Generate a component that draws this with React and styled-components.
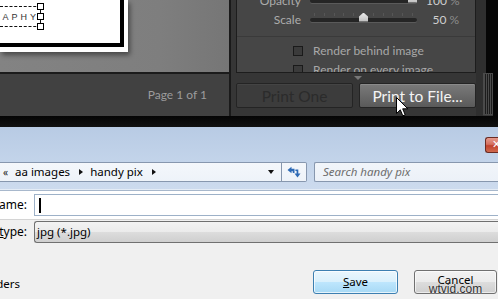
import React from 'react';
import styled, { createGlobalStyle, css } from 'styled-components';

const LR = `Lato, "Liberation Sans", sans-serif`;
const WIN = `"Noto Sans", "Liberation Sans", sans-serif`;

const Global = createGlobalStyle`
  html, body { margin: 0; padding: 0; background: #f0f0f0; }
  body { width: 498px; height: 299px; overflow: hidden; }
  * { box-sizing: border-box; }
`;

const Screen = styled.div`
  position: relative;
  width: 498px;
  height: 299px;
  overflow: hidden;
  display: flex;
  flex-direction: column;
`;

/* ---------- Lightroom part ---------- */
const LrTop = styled.div`
  height: 116px;
  display: flex;
  background: #383838;
  font-family: ${LR};
`;
const LeftCol = styled.div`
  width: 229px;
  display: flex;
  flex-direction: column;
`;
const Canvas = styled.div`
  height: 72px;
  background: linear-gradient(90deg, #838383 0%, #7e7e7e 70%, #767676 100%);
  overflow: hidden;
`;
const Paper = styled.div`
  width: 128px;
  height: 52px;
  background: #fff;
  padding: 0 4px 5px 0;
  box-shadow: 2px 3px 5px rgba(0, 0, 0, 0.45);
  display: flex;
`;
const Frame = styled.div`
  flex: 1;
  border-right: 4px solid #000;
  border-bottom: 4px solid #000;
  padding-top: 6px;
`;
const TextBox = styled.div`
  position: relative;
  width: 41px;
  height: 21px;
  border-top: 1px dashed #111;
  border-bottom: 1px dashed #111;
  border-right: 1px solid #111;
  display: flex;
  padding-right: 1px;
`;
const TextClip = styled.div`
  flex: 1;
  overflow: hidden;
  display: flex;
  justify-content: flex-end;
  align-items: center;
`;
const BoxText = styled.span`
  flex-shrink: 0;
  white-space: nowrap;
  font-family: "Liberation Sans", sans-serif;
  font-size: 9px;
  letter-spacing: 3px;
  color: #333;
  line-height: 10px;
`;
const Handle = styled.span`
  position: absolute;
  right: -4px;
  width: 7px;
  height: 7px;
  background: #fff;
  border: 1px solid #000;
  ${p => p.$pos === 'top' && css`top: -4px;`}
  ${p => p.$pos === 'mid' && css`top: 6px;`}
  ${p => p.$pos === 'bot' && css`bottom: -4px;`}
`;
const Toolbar = styled.div`
  flex: 1;
  border-top: 2px solid #1b1b1b;
  background: #414141;
  display: flex;
  align-items: center;
  justify-content: flex-end;
  padding-right: 22px;
`;
const PageLabel = styled.span`
  font-size: 12px;
  color: #9c9c9c;
  line-height: 14px;
`;
const VSep = styled.div`
  width: 2px;
  background: #1a1a1a;
`;
const PanelCol = styled.div`
  width: 245px;
  padding-left: 5px;
  display: flex;
  flex-direction: column;
  background: #363636;
`;
const PanelBox = styled.div`
  height: 73px;
  border: 1px solid #1d1d1d;
  border-top: none;
  background: #464646;
  overflow: hidden;
`;
const SliderRow = styled.div`
  display: grid;
  grid-template-columns: 64px 107px 1fr;
  column-gap: 9px;
  align-items: center;
  height: 19px;
  padding-right: 16px;
  ${p => p.$first && css`margin-top: -9px;`}
`;
const RowLabel = styled.span`
  text-align: right;
  font-size: 12px;
  color: #acacac;
  line-height: 14px;
`;
const Track = styled.div`
  position: relative;
  height: 4px;
  border-radius: 2px;
  background: #252525;
  box-shadow: 0 1px 0 #5a5a5a;
`;
const Ticks = styled.div`
  position: absolute;
  left: 4px;
  right: 4px;
  top: -5px;
  height: 3px;
  background: repeating-linear-gradient(90deg, #565656 0 1px, transparent 1px 9.8px);
`;
const Thumb = styled.div`
  position: absolute;
  top: -5px;
  width: 9px;
  height: 9px;
  background: linear-gradient(#eaeaea, #bdbdbd);
  clip-path: polygon(50% 0, 100% 45%, 100% 100%, 0 100%, 0 45%);
`;
const Value = styled.span`
  text-align: right;
  font-size: 12px;
  line-height: 14px;
  color: #cfcfcf;
  white-space: nowrap;
`;
const Pct = styled.span`
  color: #8c8c8c;
  margin-left: 3px;
`;
const Divider = styled.div`
  height: 1px;
  background: #3a3a3a;
  margin: 7px 0 4px;
`;
const CheckRow = styled.div`
  display: flex;
  align-items: center;
  height: 19px;
  padding-left: 56px;
  gap: 10px;
`;
const Check = styled.span`
  width: 10px;
  height: 10px;
  border: 1px solid #1a1a1a;
  background: #3b3b3b;
`;
const CheckLabel = styled.span`
  font-size: 12px;
  color: #a8a8a8;
  line-height: 14px;
  white-space: nowrap;
`;
const BottomArea = styled.div`
  flex: 1;
  display: flex;
  flex-direction: column;
`;
const TriRow = styled.div`
  height: 10px;
  display: flex;
  justify-content: center;
  align-items: center;
  padding-left: 4px;
`;
const Tri = styled.span`
  width: 0;
  height: 0;
  border-left: 4px solid transparent;
  border-right: 4px solid transparent;
  border-top: 4px solid #777;
`;
const ButtonRow = styled.div`
  display: flex;
  gap: 6px;
`;
const LrButton = styled.div`
  width: 117px;
  height: 25px;
  border: 1px solid #242424;
  border-radius: 2px;
  display: flex;
  align-items: center;
  justify-content: center;
  font-size: 15.5px;
  line-height: 18px;
  ${p => p.$disabled ? css`
    background: #3c3c3c;
    color: #2b2b2b;
    box-shadow: inset 0 1px 0 #444;
  ` : css`
    background: linear-gradient(#7a7a7a, #5a5a5a);
    color: #f4f4f4;
    box-shadow: inset 0 1px 0 #8a8a8a;
  `}
`;
const Strip = styled.div`
  width: 7px;
  background: #2f2f2f;
`;
const GripCol = styled.div`
  width: 10px;
  display: flex;
  flex-direction: column;
`;
const GripTop = styled.div`
  height: 73px;
  background: linear-gradient(90deg, #2f2f2f 3px, #060606 3px);
`;
const Grip = styled.div`
  height: 42px;
  border: 1px solid #4a4a4a;
  background: repeating-linear-gradient(90deg, #4b4b4b 0 1px, #1c1c1c 1px 2px);
`;
const Edge = styled.div`
  flex: 1;
  background: #060606;
`;
const Band = styled.div`
  height: 11px;
  background: linear-gradient(#050505, #111);
`;

/* ---------- Windows dialog part ---------- */
const Dialog = styled.div`
  flex: 1;
  display: flex;
  flex-direction: column;
  font-family: ${WIN};
  font-size: 11.5px;
  color: #000;
`;
const TitleBar = styled.div`
  height: 35px;
  background: linear-gradient(#b8cbe4, #c3d4ea);
  display: flex;
  justify-content: flex-end;
  align-items: flex-start;
  padding-top: 10px;
`;
const CloseBtn = styled.div`
  width: 13px;
  height: 16px;
  border: 1px solid #6b2b22;
  border-right: none;
  border-radius: 3px 0 0 3px;
  background: linear-gradient(#e59a8d 0%, #d4705f 45%, #c2412c 55%, #cf6a4f 100%);
  color: #fff;
  font-family: "DejaVu Sans", sans-serif;
  font-size: 11px;
  font-weight: bold;
  line-height: 14px;
  padding-left: 6px;
  overflow: hidden;
  white-space: nowrap;
`;
const NavBand = styled.div`
  height: 29px;
  background: linear-gradient(#c3d4ea, #cddbee);
  border-bottom: 1px solid #a8b8cc;
  box-shadow: inset 0 -1px 0 #e4ecf6;
`;
const AddressRow = styled.div`
  height: 20px;
  display: flex;
  gap: 7px;
`;
const AddrBox = styled.div`
  width: 307px;
  display: flex;
  border: 1px solid #8797ae;
  border-left: none;
  background: linear-gradient(#f4f7fb, #eef3f9);
  border-radius: 0 2px 2px 0;
`;
const Crumbs = styled.div`
  flex: 1;
  display: flex;
  align-items: center;
  padding-left: 3px;
  line-height: 14px;
  white-space: nowrap;
`;
const Chev = styled.span`
  font-size: 10px;
  width: 12px;
  color: #222;
`;
const CrumbArrow = styled.span`
  width: 0;
  height: 0;
  border-top: 3.5px solid transparent;
  border-bottom: 3.5px solid transparent;
  border-left: 4px solid #111;
  margin: 0 ${p => p.$right}px 0 ${p => p.$left}px;
`;
const DropArrow = styled.span`
  width: 0;
  height: 0;
  border-left: 3.5px solid transparent;
  border-right: 3.5px solid transparent;
  border-top: 4px solid #111;
  margin: 0 7px 0 auto;
`;
const RefreshBox = styled.div`
  width: 25px;
  border-left: 1px solid #8797ae;
  display: flex;
  align-items: center;
  justify-content: center;
`;
const SearchBox = styled.div`
  flex: 1;
  border: 1px solid #8797ae;
  border-right: none;
  border-radius: 2px 0 0 2px;
  background: linear-gradient(#f1f5fa, #ecf1f8);
  display: flex;
  align-items: center;
  padding-left: 8px;
  font-style: italic;
  color: #6d6d6d;
  line-height: 14px;
  white-space: nowrap;
`;
const WhiteArea = styled.div`
  height: 29px;
  background: #fff;
  border-bottom: 1px solid #d4d4d4;
  padding-top: 3px;
`;
const FieldRow = styled.div`
  display: flex;
  gap: 7px;
  height: 22px;
`;
const FieldLabel = styled.div`
  width: 27px;
  display: flex;
  justify-content: flex-end;
  align-items: center;
  overflow: hidden;
  white-space: nowrap;
  line-height: 14px;
  font-size: 12px;
`;
const LabelText = styled.span`
  flex-shrink: 0;
`;
const U = styled.span`
  text-decoration: underline;
`;
const Input = styled.div`
  flex: 1;
  border: 1px solid #9db1c8;
  border-right: none;
  background: #fff;
  display: flex;
  align-items: center;
  padding-left: 4px;
`;
const Caret = styled.span`
  width: 2px;
  height: 15px;
  background: #000;
`;
const GrayArea = styled.div`
  flex: 1;
  background: #f0f0f0;
  padding-top: 1px;
  display: flex;
  flex-direction: column;
`;
const Combo = styled.div`
  flex: 1;
  border: 1px solid #707070;
  border-right: none;
  border-radius: 3px 0 0 3px;
  background: linear-gradient(#f3f3f3 0%, #ebebeb 50%, #dddddd 50%, #cfcfcf 100%);
  display: flex;
  align-items: center;
  padding-left: 2px;
  line-height: 14px;
`;
const ActionRow = styled.div`
  margin-top: 27px;
  height: 24px;
  display: flex;
  align-items: center;
  padding-right: 1px;
`;
const HideLabel = styled.div`
  width: 20px;
  display: flex;
  justify-content: flex-end;
  overflow: hidden;
  white-space: nowrap;
  line-height: 14px;
  font-size: 11.5px;
  margin-top: 4px;
  margin-right: auto;
`;
const WinButton = styled.div`
  position: relative;
  width: ${p => p.$w}px;
  height: 24px;
  border-radius: 3px;
  display: flex;
  align-items: center;
  justify-content: center;
  line-height: 14px;
  ${p => p.$default ? css`
    border: 1px solid #3c7fb1;
    background: linear-gradient(#eaf6fd 0%, #d9f0fc 50%, #bee6fd 50%, #a7d9f5 100%);
    box-shadow: inset 0 0 0 1px rgba(255,255,255,0.7);
  ` : css`
    border: 1px solid #707070;
    background: linear-gradient(#f2f2f2 0%, #ebebeb 50%, #dddddd 50%, #cfcfcf 100%);
    box-shadow: inset 0 0 0 1px rgba(255,255,255,0.6);
  `}
`;
const ButtonText = styled.span`
  ${p => p.$raised && css`margin-top: -4px;`}
`;
const Watermark = styled.span`
  position: absolute;
  left: 0;
  right: 0;
  top: 12px;
  text-align: center;
  font-family: "Liberation Sans", sans-serif;
  font-size: 12px;
  line-height: 12px;
  color: #2e2e2e;
  text-shadow: 0 0 1px #fff;
`;
const Cursor = styled.svg`
  position: absolute;
  left: 396px;
  top: 97px;
`;

function Slider({ value, ticks }) {
  return (
    <Track>
      {ticks && <Ticks />}
      <Thumb style={{ left: `${(value / 100) * 98}px` }} />
    </Track>
  );
}

export default function App() {
  return (
    <>
      <Global />
      <Screen>
        <LrTop>
          <LeftCol>
            <Canvas>
              <Paper>
                <Frame>
                  <TextBox>
                    <TextClip>
                      <BoxText>PHOTOGRAPHY</BoxText>
                    </TextClip>
                    <Handle $pos="top" />
                    <Handle $pos="mid" />
                    <Handle $pos="bot" />
                  </TextBox>
                </Frame>
              </Paper>
            </Canvas>
            <Toolbar>
              <PageLabel>Page 1 of 1</PageLabel>
            </Toolbar>
          </LeftCol>
          <VSep />
          <PanelCol>
            <PanelBox>
              <SliderRow $first>
                <RowLabel>Opacity</RowLabel>
                <Slider value={100} />
                <Value>100<Pct>%</Pct></Value>
              </SliderRow>
              <SliderRow>
                <RowLabel>Scale</RowLabel>
                <Slider value={50} ticks />
                <Value>50<Pct>%</Pct></Value>
              </SliderRow>
              <Divider />
              <CheckRow>
                <Check />
                <CheckLabel>Render behind image</CheckLabel>
              </CheckRow>
              <CheckRow>
                <Check />
                <CheckLabel>Render on every image</CheckLabel>
              </CheckRow>
            </PanelBox>
            <BottomArea>
              <TriRow><Tri /></TriRow>
              <ButtonRow>
                <LrButton $disabled>Print One</LrButton>
                <LrButton>Print to File...</LrButton>
              </ButtonRow>
            </BottomArea>
          </PanelCol>
          <Strip />
          <GripCol>
            <GripTop />
            <Grip />
          </GripCol>
          <Edge />
        </LrTop>
        <Band />
        <Dialog>
          <TitleBar>
            <CloseBtn>✕</CloseBtn>
          </TitleBar>
          <NavBand>
            <AddressRow>
              <AddrBox>
                <Crumbs>
                  <Chev>«</Chev>
                  <span>aa images</span>
                  <CrumbArrow $left={9} $right={7} />
                  <span>handy pix</span>
                  <CrumbArrow $left={9} $right={0} />
                  <DropArrow />
                </Crumbs>
                <RefreshBox>
                  <svg width="14" height="12" viewBox="0 0 14 12">
                    <path d="M0.5 4 L4.5 0.8 L4.5 2.8 L7.5 2.8 L7.5 7 L5.8 7 L5.8 5.2 L4.5 5.2 L4.5 7.2 Z" fill="#2e6ab5" />
                    <path d="M13.5 7.5 L10.5 11.5 L7.5 7.5 L9.6 7.5 L9.6 5 L8.4 5 L8.4 3.6 L11.3 3.6 L11.3 7.5 Z" fill="#2e6ab5" />
                  </svg>
                </RefreshBox>
              </AddrBox>
              <SearchBox>Search handy pix</SearchBox>
            </AddressRow>
          </NavBand>
          <WhiteArea>
            <FieldRow>
              <FieldLabel><LabelText>File <U>n</U>ame:</LabelText></FieldLabel>
              <Input><Caret /></Input>
            </FieldRow>
          </WhiteArea>
          <GrayArea>
            <FieldRow>
              <FieldLabel><LabelText>Save as <U>t</U>ype:</LabelText></FieldLabel>
              <Combo>jpg (*.jpg)</Combo>
            </FieldRow>
            <ActionRow>
              <HideLabel><LabelText>Hide Folders</LabelText></HideLabel>
              <WinButton $default $w={85}><ButtonText><U>S</U>ave</ButtonText></WinButton>
              <WinButton $w={83} style={{ marginLeft: 16 }}>
                <ButtonText $raised>Cancel</ButtonText>
                <Watermark>wtvid.com</Watermark>
              </WinButton>
            </ActionRow>
          </GrayArea>
        </Dialog>
        <Cursor width="13" height="21" viewBox="0 0 13 21">
          <path d="M0.5 0.5 L0.5 16.5 L4.3 12.8 L6.8 18.8 L9.2 17.8 L6.7 11.8 L11.8 11.8 Z" fill="#fff" stroke="#000" strokeWidth="1" strokeLinejoin="miter" />
        </Cursor>
      </Screen>
    </>
  );
}
